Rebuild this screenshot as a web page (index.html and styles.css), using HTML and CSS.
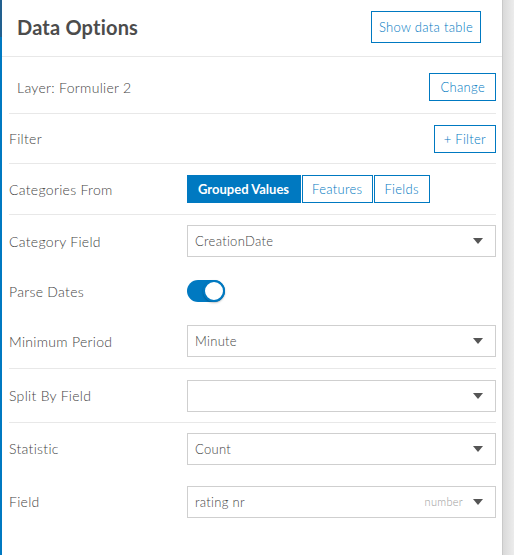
FILE: index.html
```html
<!DOCTYPE html>
<html lang="en">
<head>
<meta charset="utf-8">
<title>Data Options</title>
<link rel="stylesheet" href="styles.css">
</head>
<body>
<div class="shell">
  <div class="edge"></div>
  <section class="panel">
    <header class="panel-head">
      <h1 class="title">Data Options</h1>
      <button class="btn">Show data table</button>
    </header>
    <div class="panel-body">
      <div class="row row-layer">
        <span class="layer-name">Layer: Formulier 2</span>
        <button class="btn btn-sm">Change</button>
      </div>
      <div class="row row-filter">
        <span class="label">Filter</span>
        <button class="btn btn-sm btn-filter">+ Filter</button>
      </div>
      <div class="row row-cats">
        <span class="label">Categories From</span>
        <div class="segmented">
          <button class="seg seg-on">Grouped Values</button>
          <button class="seg">Features</button>
          <button class="seg">Fields</button>
        </div>
      </div>
      <div class="group group-cat">
        <div class="field-row">
          <span class="label">Category Field</span>
          <div class="select"><span class="value">CreationDate</span><span class="caret"></span></div>
        </div>
        <div class="field-row">
          <span class="label">Parse Dates</span>
          <div class="toggle"><span class="knob"></span></div>
        </div>
        <div class="field-row">
          <span class="label">Minimum Period</span>
          <div class="select"><span class="value">Minute</span><span class="caret"></span></div>
        </div>
      </div>
      <div class="group group-split">
        <div class="field-row tall">
          <span class="label">Split By Field</span>
          <div class="select"><span class="value"></span><span class="caret"></span></div>
        </div>
      </div>
      <div class="group group-stat">
        <div class="field-row tall">
          <span class="label">Statistic</span>
          <div class="select"><span class="value">Count</span><span class="caret"></span></div>
        </div>
        <div class="field-row tall">
          <span class="label">Field</span>
          <div class="select"><span class="value">rating nr</span><span class="type">number</span><span class="caret"></span></div>
        </div>
      </div>
    </div>
  </section>
  <div class="gutter"></div>
</div>
</body>
</html>
```
FILE: styles.css
```css
* { box-sizing: border-box; }

html, body {
  margin: 0;
  padding: 0;
  height: 100%;
  background: #fff;
}

body {
  font-family: Lato, "Open Sans", sans-serif;
  color: #595959;
}

.shell {
  display: flex;
  height: 555px;
  overflow: hidden;
}

/* app side strip */
.edge {
  width: 2px;
  flex: none;
  background: linear-gradient(to bottom, #22608f 0, #22608f 37px, #0079c1 37px);
}

.panel {
  width: 501px;
  flex: none;
  background: #fff;
  border-right: 1px solid #c9c9c9;
  display: flex;
  flex-direction: column;
}

.gutter {
  flex: 1;
  background: linear-gradient(to right, #d9d9d9, #ececec);
}

.panel-head {
  height: 57px;
  display: flex;
  align-items: center;
  justify-content: space-between;
  padding: 0 21px 2px 15px;
  border-bottom: 1px solid #e8e8e8;
}

.title {
  margin: 0;
  font-size: 20px;
  font-weight: 700;
  color: #4c4c4c;
  letter-spacing: 0.2px;
}

.btn {
  font-family: inherit;
  font-size: 13px;
  font-weight: 300;
  letter-spacing: 0.3px;
  color: #0079c1;
  background: #fff;
  border: 1px solid #0079c1;
  height: 32px;
  padding: 0 7px;
  cursor: pointer;
}

.btn-sm {
  height: 28px;
  padding: 0 10px;
}

.btn-filter { padding: 0 9px; }

.panel-body {
  padding: 0 6px 0 7px;
}

.row {
  display: flex;
  align-items: center;
  justify-content: space-between;
  border-bottom: 1px solid #e8e8e8;
}

.row-layer { height: 57px; padding: 4px 0 0 8px; }
.row-filter { height: 50px; }
.row-cats { height: 51px; justify-content: flex-start; }

.layer-name,
.label {
  font-size: 14px;
  font-weight: 300;
  letter-spacing: 0.3px;
  color: #444;
}

.label {
  width: 178px;
  flex: none;
}

.segmented {
  display: flex;
  gap: 1px;
}

.seg {
  font-family: inherit;
  font-size: 13px;
  font-weight: 300;
  letter-spacing: 0.3px;
  height: 28px;
  color: #0079c1;
  background: #fff;
  border: 1px solid #0079c1;
  padding: 0 10px 0 9px;
}

.seg-on {
  background: #0079c1;
  color: #fff;
  font-weight: 700;
  letter-spacing: 0;
  padding: 0 11px 0 10px;
}

.group {
  border-bottom: 1px solid #e8e8e8;
}

.group-cat { padding: 1px 0 2px; }
.group-stat { border-bottom: none; margin-top: -1px; }

.field-row {
  display: flex;
  align-items: center;
  height: 50px;
}

.field-row.tall { height: 53px; }

.select {
  flex: 1;
  height: 32px;
  border: 1px solid #cfcfcf;
  display: flex;
  align-items: center;
  padding: 0 12px 0 7px;
  font-size: 13px;
  font-weight: 300;
  letter-spacing: 0.3px;
  color: #444;
}

.select .value { flex: 1; }

.select .type {
  font-size: 11px;
  color: #9a9a9a;
  margin-right: 10px;
}

.caret {
  width: 0;
  height: 0;
  border-left: 5px solid transparent;
  border-right: 5px solid transparent;
  border-top: 6px solid #555;
}

.toggle {
  width: 38px;
  height: 22px;
  border-radius: 11px;
  background: #0079c1;
  position: relative;
}

.knob {
  position: absolute;
  right: 0;
  top: 0;
  width: 22px;
  height: 22px;
  border-radius: 50%;
  background: #fff;
  border: 2px solid #0079c1;
  box-shadow: 0 1px 2px rgba(0, 0, 0, 0.25);
}
```
